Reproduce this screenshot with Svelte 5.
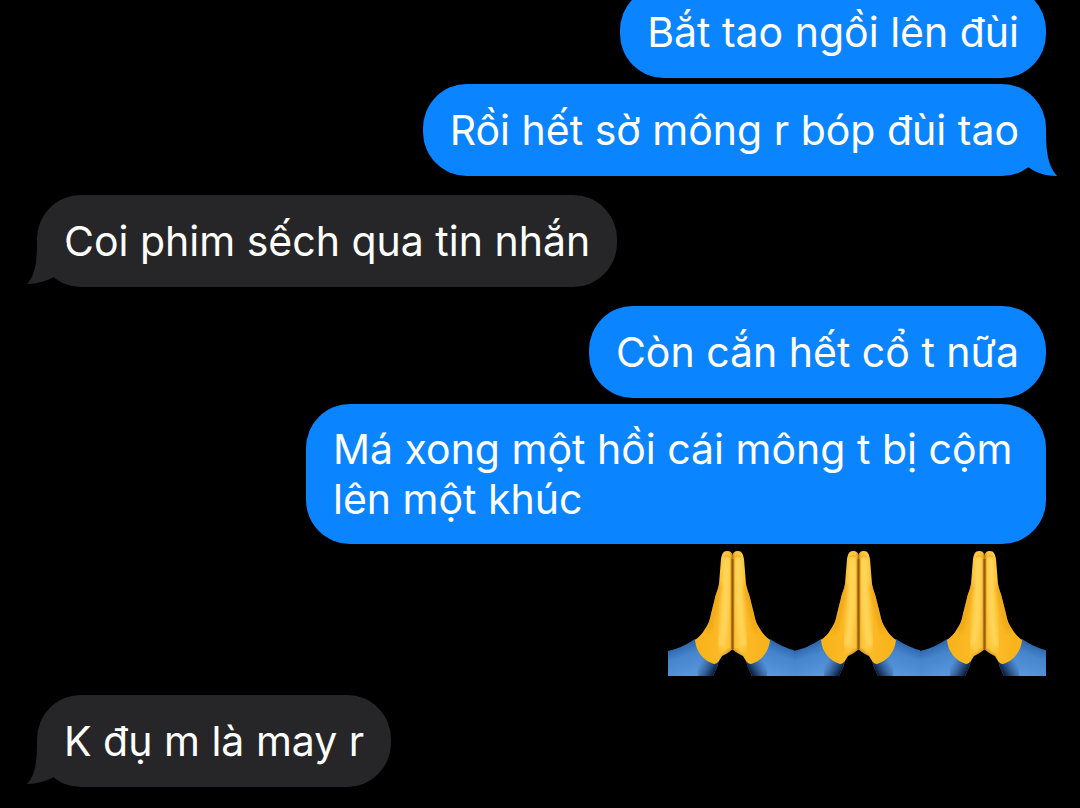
<script lang="ts">
  type Message = {
    from: "me" | "them"
    text?: string
    hands?: number
    tail?: boolean
  }

  const messages: Message[] = [
    { from: "me", text: "Bắt tao ngồi lên đùi" },
    { from: "me", text: "Rồi hết sờ mông r bóp đùi tao", tail: true },
    { from: "them", text: "Coi phim sếch qua tin nhắn", tail: true },
    { from: "me", text: "Còn cắn hết cổ t nữa" },
    { from: "me", text: "Má xong một hồi cái mông t bị cộm lên một khúc" },
    { from: "me", hands: 3 },
    { from: "them", text: "K đụ m là may r", tail: true },
  ]

  const isNewSender = (i: number) => i > 0 && messages[i - 1].from !== messages[i].from
</script>

<svg class="defs" aria-hidden="true">
  <defs>
    <linearGradient id="skin" x1="34" y1="0" x2="65" y2="0" gradientUnits="userSpaceOnUse">
      <stop offset="0" stop-color="#f9b41c" />
      <stop offset="0.5" stop-color="#fbb926" />
      <stop offset="0.72" stop-color="#ffca42" />
      <stop offset="0.9" stop-color="#fbc038" />
      <stop offset="1" stop-color="#b07208" />
    </linearGradient>
    <linearGradient id="sleeve" x1="14" y1="94" x2="26" y2="126" gradientUnits="userSpaceOnUse">
      <stop offset="0" stop-color="#2a64ab" />
      <stop offset="0.35" stop-color="#4685cd" />
      <stop offset="1" stop-color="#5897dd" />
    </linearGradient>
    <linearGradient id="cuff" x1="35" y1="108" x2="50" y2="117" gradientUnits="userSpaceOnUse">
      <stop offset="0" stop-color="#173d73" stop-opacity="0" />
      <stop offset="1" stop-color="#081a36" />
    </linearGradient>
    <filter id="soft" x="-40%" y="-20%" width="180%" height="140%">
      <feGaussianBlur stdDeviation="2" />
    </filter>
    <filter id="edge">
      <feGaussianBlur stdDeviation="0.5" />
    </filter>
    <clipPath id="hand-shape">
      <path
        d="M65 6 C64 2 62 1 59 1 C55 1 54 4 53 9 L51 34 C50 40 48 43 47 48 L43 64 C42 70 40 75 37 79 C34 84 31 87 27 90 C28 102 36 111 46 114 C50 114 52 109 54 106 Q59 104 65 99Z"
      />
    </clipPath>
    <g id="hand">
      <path d="M0 101 Q14 98 27 89 L52 107 Q50 117 45 126 H0Z" fill="url(#sleeve)" />
      <path d="M27 90 L52 107 Q50 117 45 126 H30Z" fill="url(#cuff)" />
      <g clip-path="url(#hand-shape)">
        <rect x="20" width="45" height="120" fill="url(#skin)" />
        <path d="M59 10 C58 40 59 65 53 94" fill="none" stroke="#ffd75d" stroke-width="6" stroke-linecap="round" filter="url(#soft)" />
        <path d="M51 34 C48 52 45 68 40 82" fill="none" stroke="#eda315" stroke-width="4" filter="url(#soft)" />
        <path d="M54 108 Q59 105 65 100" fill="none" stroke="#b97709" stroke-width="3" filter="url(#soft)" />
        <path d="M56 7 Q59 4 62 7" fill="none" stroke="#eda61c" stroke-width="1" />
      </g>
    </g>
    <symbol id="folded-hands" viewBox="0 0 126 126">
      <g filter="url(#edge)">
        <use href="#hand" />
        <use href="#hand" transform="translate(129 0) scale(-1 1)" />
        <path d="M64.500 9 V99" stroke="#955c05" stroke-width="2" />
      </g>
    </symbol>
  </defs>
</svg>

<main>
  <ol>
    {#each messages as message, i}
      <li class={message.from} class:turn={isNewSender(i)}>
        {#if message.hands}
          <div class="emoji" role="img" aria-label="🙏🙏🙏">
            {#each Array(message.hands) as _}
              <svg viewBox="0 0 126 126"><use href="#folded-hands" /></svg>
            {/each}
          </div>
        {:else}
          <div class="bubble">
            <p>{message.text}</p>
            {#if message.tail}
              <svg class="tail" viewBox="0 0 40 44" aria-hidden="true">
                {#if message.from === "me"}
                  <path d="M29 0 C29 20 31 34 40 44 C29 44 19 41 11 35 L0 0Z" />
                {:else}
                  <path d="M10 0 C10 20 8 32 0 41 C10 41 19 38 27 34 L40 0Z" />
                {/if}
              </svg>
            {/if}
          </div>
        {/if}
      </li>
    {/each}
  </ol>
</main>

<style>
  :global(body) {
    background: #000;
    overflow: hidden;
  }

  .defs {
    position: absolute;
    width: 0;
    height: 0;
  }

  /* newest message stays at the bottom, older ones run off the top */
  main {
    display: flex;
    flex-direction: column;
    justify-content: flex-end;
    height: 100vh;
    overflow: hidden;
    box-sizing: border-box;
    padding: 0 34px 21px 37px;
    color: #fff;
    font-family: Inter, Roboto, "Liberation Sans", sans-serif;
    font-size: 41px;
    line-height: 50px;
  }

  ol {
    display: flex;
    flex-direction: column;
    gap: 6px;
    list-style: none;
    margin: 0;
    padding: 0;
  }

  li { display: flex; }
  li.me { justify-content: flex-end; }
  li.turn { margin-top: 13px; }

  .bubble {
    position: relative;
    display: flex;
    align-items: center;
    box-sizing: border-box;
    min-height: 92px;
    max-width: 740px;
    padding: 20px 27px;
    border-radius: 44px;
  }

  .me .bubble { background: #0b84ff; fill: #0b84ff; }
  .them .bubble { background: #262628; fill: #262628; }

  p { margin: 0; }

  .tail {
    position: absolute;
    bottom: 0;
    width: 40px;
    height: 44px;
  }

  .me .tail { right: -11px; }
  .them .tail { left: -10px; }

  .emoji { display: flex; }

  .emoji svg {
    display: block;
    width: 126px;
    height: 126px;
  }
</style>
